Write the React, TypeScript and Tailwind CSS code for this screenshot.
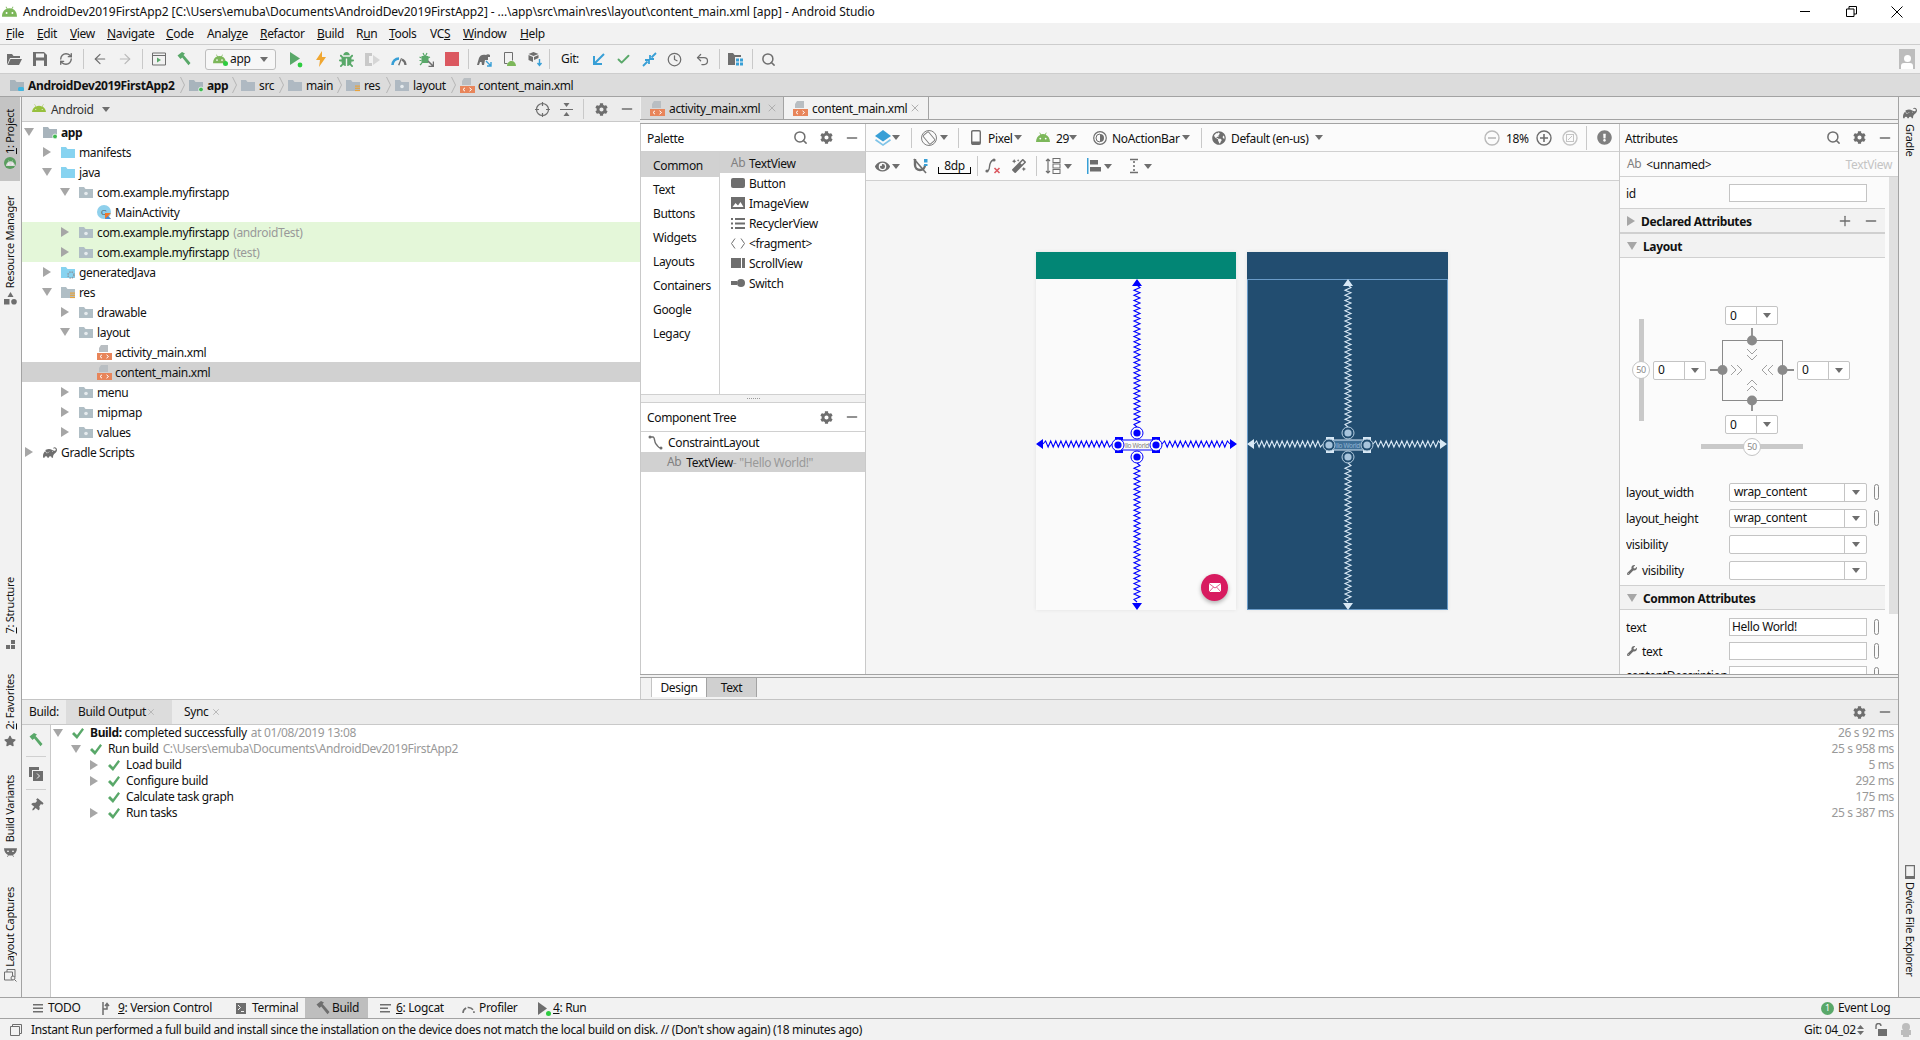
import { ReactNode } from 'react';
import { ArrowLeft, ArrowRight, Check, Minus, Plus, RefreshCw, Search, X, Clock, Undo2 } from 'lucide-react';
import { FaAndroid, FaBug, FaCog, FaEye, FaGlobeAmericas, FaMagic, FaStar, FaThumbtack, FaWrench, FaExclamationCircle } from 'react-icons/fa';
import { SiGradle } from 'react-icons/si';

const GRAY = '#6e6e6e';
const GREEN = '#59a869';
const BLUE = '#389fd6';

// text label, nudged 1px down to sit where Segoe UI sat in its row
function L({ children, className = '' }: { children: ReactNode; className?: string }) {
  return <span className={`pt-[2px] whitespace-nowrap ${className}`}>{children}</span>;
}

function Caret({ className = '' }: { className?: string }) {
  return (
    <svg width="8" height="5" viewBox="0 0 8 5" className={`shrink-0 ${className}`}>
      <path d="M0 0h8L4 5z" fill={GRAY} />
    </svg>
  );
}

function TreeArrow({ open }: { open?: boolean }) {
  if (open) {
    return (
      <svg width="10" height="8" viewBox="0 0 10 8" className="shrink-0">
        <path d="M0 0h10L5 8z" fill="#a6a6a6" />
      </svg>
    );
  }
  return (
    <svg width="8" height="10" viewBox="0 0 8 10" className="shrink-0">
      <path d="M0 0l8 5-8 5z" fill="#a6a6a6" />
    </svg>
  );
}

function Folder({ color = '#b0bec5', badge }: { color?: string; badge?: 'dot' | 'green' | 'lines' | 'gear' | 'cup' }) {
  return (
    <svg width="14" height="13" viewBox="0 0 14 13" className="shrink-0">
      <path d="M0 1h5l1.5 2H14v9H0z" fill={color} />
      {badge === 'dot' && <circle cx="7" cy="7.5" r="1.8" fill="#e6ebee" />}
      {badge === 'green' && <circle cx="12" cy="10.5" r="2.4" fill="#3fb950" stroke="#fff" strokeWidth="0.8" />}
      {badge === 'lines' && (
        <g fill="#e8a33d">
          <rect x="9" y="6.5" width="5" height="1.2" />
          <rect x="9" y="8.7" width="5" height="1.2" />
          <rect x="9" y="10.9" width="5" height="1.2" />
        </g>
      )}
      {badge === 'gear' && <circle cx="10" cy="9" r="3" fill="none" stroke="#8a9aa5" strokeWidth="1.6" strokeDasharray="1.4 1" />}
      {badge === 'cup' && <rect x="8" y="8" width="6" height="4" rx="1.5" fill="#40b6e0" />}
    </svg>
  );
}

function XmlFile() {
  return (
    <svg width="15" height="15" viewBox="0 0 15 15" className="shrink-0">
      <path d="M4 0h7v7H2V3z" fill="#b9bec2" />
      <rect x="0" y="8" width="15" height="7" fill="#e8855a" />
      <path d="M5 9.8L3 11.5 5 13.2M9.5 9.8l2 1.7-2 1.7" fill="none" stroke="#fff" strokeWidth="1" />
    </svg>
  );
}

function KotlinClass() {
  return (
    <svg width="14" height="14" viewBox="0 0 14 14" className="shrink-0">
      <circle cx="7" cy="7" r="7" fill="#8fd0ec" />
      <text x="4" y="10" fontSize="8" fill="#4a5a66" fontFamily="Liberation Sans, sans-serif">C</text>
      <path d="M8 14V8h6l-3 3 3 3z" fill="#f0772b" />
      <path d="M8 14l3-3 3 3z" fill="#3f8fe0" />
    </svg>
  );
}

function Hammer({ color = GREEN }: { color?: string }) {
  return (
    <svg width="16" height="16" viewBox="0 0 16 16" className="shrink-0">
      <path d="M1.5 4.5L6 1l3 1.5L7.5 4l1 1L14.5 12l-2 2.2-6.3-7.6L4.5 8z" fill={color} />
    </svg>
  );
}

function AndroidHead({ size = 14, color = '#7cb75a' }: { size?: number; color?: string }) {
  return (
    <svg width={size} height={size * 0.72} viewBox="0 0 14 10" className="shrink-0">
      <path d="M0 10C0 6 2 3.4 4.4 2.6L3.3.8l.6-.4L5.1 2.3a6 6 0 013.8 0L10.1.4l.6.4-1.1 1.8C12 3.4 14 6 14 10z" fill={color} />
      <circle cx="4.3" cy="6.5" r=".9" fill="#fff" />
      <circle cx="9.7" cy="6.5" r=".9" fill="#fff" />
    </svg>
  );
}

function BuildCheck() {
  return (
    <svg width="12" height="11" viewBox="0 0 12 11" className="shrink-0">
      <path d="M0 6l2-2 3 3 5.200-7L12 1.500 5 11z" fill={GREEN} />
    </svg>
  );
}

function Sep({ className = '', tall }: { className?: string; tall?: boolean }) {
  return <div className={`w-px shrink-0 bg-[#c9c9c9] ${tall ? 'h-[24px]' : 'h-[20px]'} ${className}`} />;
}

function Slot({ children }: { children?: ReactNode }) {
  return <div className="w-[25.5px] h-full shrink-0 flex items-center justify-center">{children}</div>;
}

function PanelTools({ search, minusOnly }: { search?: boolean; minusOnly?: boolean }) {
  return (
    <div className="ml-auto flex items-center">
      {search && (
        <div className="w-[26px] flex justify-center">
          <Search size={15} strokeWidth={2.4} color={GRAY} />
        </div>
      )}
      {!minusOnly && (
        <div className="w-[26px] flex justify-center">
          <FaCog size={13} color={GRAY} />
        </div>
      )}
      <div className="w-[26px] flex justify-center">
        <Minus size={16} strokeWidth={2} color={GRAY} />
      </div>
    </div>
  );
}

const menus = [
  { label: 'File', u: 0, w: 'w-[31px]' },
  { label: 'Edit', u: 0, w: 'w-[33px]' },
  { label: 'View', u: 0, w: 'w-[37px]' },
  { label: 'Navigate', u: 0, w: 'w-[59px]' },
  { label: 'Code', u: 0, w: 'w-[41px]' },
  { label: 'Analyze', u: 5, w: 'w-[53px]' },
  { label: 'Refactor', u: 0, w: 'w-[57px]' },
  { label: 'Build', u: 0, w: 'w-[39px]' },
  { label: 'Run', u: 1, w: 'w-[33px]' },
  { label: 'Tools', u: 0, w: 'w-[41px]' },
  { label: 'VCS', u: 2, w: 'w-[33px]' },
  { label: 'Window', u: 0, w: 'w-[57px]' },
  { label: 'Help', u: 0, w: 'w-[40px]' },
];

function TitleBar() {
  return (
    <div className="h-[23px] shrink-0 bg-white flex items-center pl-[2px]">
      <AndroidHead size={15} />
      <span className="ml-[6px] whitespace-nowrap tracking-[-0.08px]">
        AndroidDev2019FirstApp2 [C:\Users\emuba\Documents\AndroidDev2019FirstApp2] - ...\app\src\main\res\layout\content_main.xml [app] - Android Studio
      </span>
      <div className="ml-auto flex items-center h-full">
        <div className="w-[46px] flex justify-center">
          <div className="w-[10px] h-px bg-black" />
        </div>
        <div className="w-[46px] flex justify-center">
          <svg width="11" height="11" viewBox="0 0 11 11">
            <path d="M.5 3h7.5v7.5H.5zM3 3V.5h7.5V8H8" fill="none" stroke="#000" />
          </svg>
        </div>
        <div className="w-[46px] flex justify-center pr-[1px]">
          <svg width="12" height="12" viewBox="0 0 12 12">
            <path d="M.5.5l11 11M11.5.5l-11 11" stroke="#000" />
          </svg>
        </div>
      </div>
    </div>
  );
}

function MenuBar() {
  return (
    <div className="h-[22px] shrink-0 flex items-center pl-[6px] border-b border-[#cdcdcd]">
      {menus.map((m) => (
        <div key={m.label} className={`${m.w} shrink-0 whitespace-nowrap`}>
          {m.label.slice(0, m.u)}
          <u>{m.label[m.u]}</u>
          {m.label.slice(m.u + 1)}
        </div>
      ))}
    </div>
  );
}

function MainToolbar() {
  return (
    <div className="h-[29px] shrink-0 flex items-center pl-[2px] border-b border-[#cdcdcd]">
      <Slot>
        <svg width="15" height="13" viewBox="0 0 15 13">
          <path d="M0 1h5l1.5 2H13v2H3L0 12z" fill={GRAY} />
          <path d="M3.5 6H15l-3 6H.7z" fill={GRAY} />
        </svg>
      </Slot>
      <Slot>
        <svg width="14" height="14" viewBox="0 0 14 14">
          <path d="M0 0h11l3 3v11H0z" fill={GRAY} />
          <rect x="3" y="1.5" width="8" height="4" fill="#f2f2f2" />
          <rect x="3" y="8.5" width="8" height="5.5" fill="#f2f2f2" />
        </svg>
      </Slot>
      <Slot>
        <RefreshCw size={14} strokeWidth={2.4} color={GRAY} />
      </Slot>
      <Sep className="ml-[4.5px]" />
      <div className="w-[3px] shrink-0" />
      <Slot>
        <ArrowLeft size={16} strokeWidth={1.8} color={GRAY} />
      </Slot>
      <Slot>
        <ArrowRight size={16} strokeWidth={1.8} color="#b9b9b9" />
      </Slot>
      <Sep className="ml-[4px]" />
      <div className="w-[3px] shrink-0" />
      <Slot>
        <svg width="14" height="14" viewBox="0 0 14 14">
          <path d="M.5 1h13v12H.5zM.5 3.5h13" fill="none" stroke={GRAY} />
          <path d="M5 5.5l4 2.5-4 2.5z" fill={GREEN} />
        </svg>
      </Slot>
      <Slot>
        <Hammer />
      </Slot>
      <div className="ml-[8px] w-[71px] h-[21px] shrink-0 flex items-center pl-[7px] rounded-[3px] border border-[#bdbdbd] bg-[#f7f7f7]">
        <div className="relative">
          <AndroidHead size={13} />
          <div className="absolute right-[-2px] bottom-[-2px] w-[5px] h-[5px] rounded-full bg-[#2ecc40]" />
        </div>
        <span className="ml-[4px]">app</span>
        <Caret className="ml-auto mr-[7px]" />
      </div>
      <div className="w-[7px] shrink-0" />
      <Slot>
        <svg width="14" height="17" viewBox="0 0 14 17">
          <path d="M1 1l10 6.500L1 14z" fill={GREEN} />
          <circle cx="11" cy="14" r="2.400" fill="#2ecc40" />
        </svg>
      </Slot>
      <Slot>
        <svg width="10" height="16" viewBox="0 0 10 16">
          <path d="M6 0L0 9h4l-1 7 7-10H6z" fill="#f0a732" />
        </svg>
      </Slot>
      <Slot>
        <FaBug size={15} color={GREEN} />
      </Slot>
      <Slot>
        <svg width="16" height="15" viewBox="0 0 16 15">
          <path d="M1 1h7v3H5v7h3v3H1z" fill="#c9c9c9" />
          <path d="M9 3l7 5-7 5z" fill="#d6d6d6" />
        </svg>
      </Slot>
      <div className="w-px shrink-0" />
      <Slot>
        <svg width="16" height="13" viewBox="0 0 16 13">
          <path d="M1.500 12a6.500 6.500 0 016.500-6.500" fill="none" stroke={BLUE} strokeWidth="2.600" />
          <path d="M11 6.500A6.500 6.500 0 0114.500 12" fill="none" stroke={GRAY} strokeWidth="2.200" />
          <path d="M7 12l3-7 1 .5-2.600 7z" fill={GRAY} />
        </svg>
      </Slot>
      <div className="w-[2px] shrink-0" />
      <Slot>
        <svg width="15" height="15" viewBox="0 0 15 15">
          <path d="M2.500 4h7v7h-7z" fill={GREEN} />
          <path d="M.5 5l2 1M.5 8.500h2M1 13l2-2M4 1l1.500 3M8 1L6.500 4M11 5L9 6" stroke={GREEN} strokeWidth="1.200" />
          <path d="M9 9l5 5M14.500 9.500v5h-5" fill="none" stroke={GRAY} strokeWidth="1.500" />
        </svg>
      </Slot>
      <Slot>
        <div className="w-[14px] h-[14px] bg-[#db5860]" />
      </Slot>
      <Sep className="ml-[3px]" />
      <div className="w-[3px] shrink-0" />
      <Slot>
        <svg width="16" height="15" viewBox="0 0 16 15">
          <path d="M1 13l2-7c1-3 4-4 7-3 1-1 3-1 4 0v2h-2v3H9l-1 5H6l-.5-3H4l-1 3z" fill={GRAY} />
          <path d="M10 9l5 5M15 10v4h-4" fill="none" stroke={BLUE} strokeWidth="1.400" />
        </svg>
      </Slot>
      <Slot>
        <svg width="15" height="15" viewBox="0 0 15 15">
          <path d="M2.500.500h8v8M2.500.500v11h3" fill="none" stroke={GRAY} />
          <path d="M5 14c0-3 2-5 4.500-5S14 11 14 14z" fill="#7cb75a" />
        </svg>
      </Slot>
      <Slot>
        <svg width="15" height="15" viewBox="0 0 15 15">
          <path d="M5.500 0l5 2-5 2-5-2z" fill={GRAY} />
          <path d="M.5 3l4.500 2v5l-4.500-2zM6 5l4.500-2v3L6 8z" fill={GRAY} />
          <path d="M11.500 7v6M9.500 11l2 2.500 2-2.500" fill="none" stroke={BLUE} strokeWidth="1.400" />
        </svg>
      </Slot>
      <Sep className="ml-[1px]" />
      <span className="ml-[11px] w-[18px] shrink-0">Git:</span>
      <div className="w-[6.5px] shrink-0" />
      <Slot>
        <svg width="13" height="13" viewBox="0 0 13 13">
          <path d="M12 1L2 11M2 3v8h8" fill="none" stroke={BLUE} strokeWidth="2" />
        </svg>
      </Slot>
      <Slot>
        <Check size={15} strokeWidth={3} color={GREEN} />
      </Slot>
      <Slot>
        <svg width="15" height="15" viewBox="0 0 15 15">
          <path d="M1 14l4.500-4.500M3 8h4v4M14 1L9.500 5.500M12 7H8V3" fill="none" stroke={BLUE} strokeWidth="1.800" />
        </svg>
      </Slot>
      <Slot>
        <Clock size={15} strokeWidth={2} color={GRAY} />
      </Slot>
      <div className="w-[2.5px] shrink-0" />
      <Slot>
        <Undo2 size={15} strokeWidth={2} color={GRAY} />
      </Slot>
      <Sep className="ml-[3px]" />
      <div className="w-[3px] shrink-0" />
      <Slot>
        <svg width="15" height="14" viewBox="0 0 15 14">
          <path d="M0 1h5l1.500 2H13v2H7v8H0z" fill={GRAY} />
          <g fill={BLUE}>
            <rect x="8" y="6.500" width="3" height="3" />
            <rect x="12" y="6.500" width="3" height="3" />
            <rect x="8" y="10.500" width="3" height="3" />
            <rect x="12" y="10.500" width="3" height="3" />
          </g>
        </svg>
      </Slot>
      <Sep className="ml-[4px]" />
      <div className="w-[3px] shrink-0" />
      <Slot>
        <Search size={15} strokeWidth={2.4} color={GRAY} />
      </Slot>
      <div className="ml-auto mr-[5px] w-[16px] h-[20px] bg-[#bdbdbd] flex flex-col items-center justify-end overflow-hidden">
        <div className="w-[7px] h-[7px] rounded-full bg-white mb-[1px]" />
        <div className="w-[12px] h-[6px] rounded-t-[3px] bg-white" />
      </div>
    </div>
  );
}

function Chevron() {
  return (
    <svg width="5" height="18" viewBox="0 0 5 18" className="ml-[5px] mr-[4px] shrink-0">
      <path d="M.5 1l4 8-4 8" fill="none" stroke="#b5b5b5" />
    </svg>
  );
}

function Crumb({ icon, label, width, bold, last }: { icon: ReactNode; label: string; width: string; bold?: boolean; last?: boolean }) {
  return (
    <>
      <div className="w-[14px] shrink-0 flex justify-center">{icon}</div>
      <L className={`ml-[4px] ${width} shrink-0 ${bold ? 'font-bold' : ''}`}>{label}</L>
      {!last && <Chevron />}
    </>
  );
}

function Breadcrumb() {
  return (
    <div className="h-[23px] shrink-0 flex items-center pl-[10px] bg-[#dcdcdc] border-b border-[#a3a3a3]">
      <Crumb icon={<Folder color="#a8b4bc" badge="cup" />} label="AndroidDev2019FirstApp2" width="w-[147px]" bold />
      <Crumb icon={<Folder color="#a8b4bc" badge="green" />} label="app" width="w-[20px]" bold />
      <Crumb icon={<Folder color="#afb9c2" />} label="src" width="w-[15px]" />
      <Crumb icon={<Folder color="#afb9c2" />} label="main" width="w-[26px]" />
      <Crumb icon={<Folder color="#afb9c2" badge="lines" />} label="res" width="w-[17px]" />
      <Crumb icon={<Folder color="#afb9c2" badge="dot" />} label="layout" width="w-[33px]" />
      <Crumb icon={<XmlFile />} label="content_main.xml" width="w-[96px]" last />
    </div>
  );
}

function VText({ children, flip = true }: { children: ReactNode; flip?: boolean }) {
  return (
    <span className={`[writing-mode:vertical-rl] whitespace-nowrap leading-[14px] text-[11px] tracking-[-0.3px] ${flip ? 'rotate-180' : ''}`}>
      {children}
    </span>
  );
}

function LeftStrip() {
  return (
    <div className="w-[22px] shrink-0 flex flex-col items-center border-r border-[#a3a3a3] pr-[1px]">
      <div className="h-[84px] w-full shrink-0 flex flex-col items-center bg-[#c4c4c4] pt-[10px]">
        <div className="h-[47px] flex items-end">
          <VText>
            <u>1</u>: Project
          </VText>
        </div>
        <div className="mt-[3px] w-[12px] h-[12px] rounded-full bg-[#5a9e5f] flex items-center justify-center">
          <AndroidHead size={9} color="#dcdcdc" />
        </div>
      </div>
      <div className="mt-[16px] h-[91px] flex items-end">
        <VText>Resource Manager</VText>
      </div>
      <svg width="13" height="13" viewBox="0 0 13 13" className="mt-[4px]">
        <path d="M6.500 0l3 5h-6z" fill={GRAY} />
        <rect x="0" y="7" width="5.500" height="5.500" fill={GRAY} />
        <circle cx="10" cy="9.800" r="2.800" fill={GRAY} />
      </svg>
      <div className="mt-[273px] h-[55px] flex items-end">
        <VText>
          <u>7</u>: Structure
        </VText>
      </div>
      <svg width="9" height="9" viewBox="0 0 9 9" fill={GRAY} className="mt-[7px]">
        <rect x="5" y="0" width="4" height="4" />
        <rect x="0" y="5" width="4" height="4" />
        <rect x="5" y="5" width="4" height="4" />
      </svg>
      <div className="mt-[26px] h-[54px] flex items-end">
        <VText>
          <u>2</u>: Favorites
        </VText>
      </div>
      <div className="mt-[6px]">
        <FaStar size={12} color={GRAY} />
      </div>
      <div className="mt-[26px] h-[69px] flex items-end">
        <VText>Build Variants</VText>
      </div>
      <div className="mt-[6px] rotate-180">
        <AndroidHead size={13} color={GRAY} />
      </div>
      <div className="mt-[30px] h-[79px] flex items-end">
        <VText>Layout Captures</VText>
      </div>
      <svg width="13" height="13" viewBox="0 0 13 13" className="mt-[3px]">
        <path d="M.5 3h8v8h-8zM3 3V.5h8V8" fill="none" stroke={GRAY} />
        <circle cx="9" cy="9" r="2" fill="#f2f2f2" stroke={GRAY} />
        <path d="M10.500 10.500l2 2" stroke={GRAY} />
      </svg>
    </div>
  );
}

function RightStrip() {
  return (
    <div className="w-[22px] shrink-0 flex flex-col items-center border-l border-[#a3a3a3]">
      <div className="mt-[9px]">
        <SiGradle size={14} color={GRAY} />
      </div>
      <div className="mt-[4px] h-[34px]">
        <VText flip={false}>Gradle</VText>
      </div>
      <svg width="10" height="14" viewBox="0 0 10 14" className="mt-[707px]">
        <path d="M1 .5h8a.5.5 0 01.500.5v12a.5.5 0 01-.5.5H1a.5.5 0 01-.5-.5V1A.5.5 0 011 .5z" fill="none" stroke={GRAY} strokeWidth="1.400" />
        <rect x="1" y="11" width="8" height="2" fill={GRAY} />
      </svg>
      <div className="mt-[3px] h-[96px]">
        <VText flip={false}>Device File Explorer</VText>
      </div>
    </div>
  );
}

type TreeItem = {
  depth: number;
  arrow?: 'open' | 'closed';
  icon: ReactNode;
  label: string;
  suffix?: string;
  bold?: boolean;
  bg?: string;
};

const depthPad = ['pl-[3px]', 'pl-[21px]', 'pl-[39px]', 'pl-[57px]'];
const blueFolder = <Folder color="#87d3f0" />;
const pkg = <Folder color="#b0bec5" badge="dot" />;

const tree: TreeItem[] = [
  { depth: 0, arrow: 'open', icon: <Folder color="#a8b4bc" badge="green" />, label: 'app', bold: true },
  { depth: 1, arrow: 'closed', icon: blueFolder, label: 'manifests' },
  { depth: 1, arrow: 'open', icon: blueFolder, label: 'java' },
  { depth: 2, arrow: 'open', icon: pkg, label: 'com.example.myfirstapp' },
  { depth: 3, icon: <KotlinClass />, label: 'MainActivity' },
  { depth: 2, arrow: 'closed', icon: pkg, label: 'com.example.myfirstapp', suffix: '(androidTest)', bg: 'bg-[#e4f7d9]' },
  { depth: 2, arrow: 'closed', icon: pkg, label: 'com.example.myfirstapp', suffix: '(test)', bg: 'bg-[#e4f7d9]' },
  { depth: 1, arrow: 'closed', icon: <Folder color="#87d3f0" badge="gear" />, label: 'generatedJava' },
  { depth: 1, arrow: 'open', icon: <Folder color="#b0bec5" badge="lines" />, label: 'res' },
  { depth: 2, arrow: 'closed', icon: pkg, label: 'drawable' },
  { depth: 2, arrow: 'open', icon: pkg, label: 'layout' },
  { depth: 3, icon: <XmlFile />, label: 'activity_main.xml' },
  { depth: 3, icon: <XmlFile />, label: 'content_main.xml', bg: 'bg-[#d1d1d1]' },
  { depth: 2, arrow: 'closed', icon: pkg, label: 'menu' },
  { depth: 2, arrow: 'closed', icon: pkg, label: 'mipmap' },
  { depth: 2, arrow: 'closed', icon: pkg, label: 'values' },
  { depth: 0, arrow: 'closed', icon: <SiGradle size={15} color={GRAY} />, label: 'Gradle Scripts' },
];

function ProjectPanel() {
  return (
    <div className="w-[618px] shrink-0 flex flex-col bg-white">
      <div className="h-[25px] shrink-0 flex items-center bg-[#ececec] border-b border-[#c9c9c9] pl-[10px]">
        <FaAndroid size={14} color="#97c03d" />
        <L className="ml-[5px] text-[#333]">Android</L>
        <Caret className="ml-[9px]" />
        <div className="ml-auto flex items-center">
          <svg width="15" height="15" viewBox="0 0 15 15" className="mr-[10px]">
            <circle cx="7.500" cy="7.500" r="6" fill="none" stroke={GRAY} strokeWidth="1.200" />
            <path d="M7.500 0v4M7.500 11v4M0 7.500h4M11 7.500h4" stroke={GRAY} strokeWidth="1.200" />
          </svg>
          <svg width="13" height="13" viewBox="0 0 13 13" className="mr-[10px]">
            <path d="M0 6.500h13" stroke={GRAY} />
            <path d="M3.500 0h6L6.500 4zM3.500 13h6l-3-4z" fill={GRAY} />
          </svg>
          <Sep className="mr-[4px]" />
          <PanelTools />
        </div>
      </div>
      <div>
        {tree.map((t, i) => (
          <div key={i} className={`h-[20px] flex items-center ${depthPad[t.depth]} ${t.bg ?? ''}`}>
            <div className="w-[8px] mr-[10px] shrink-0 flex justify-center">
              {t.arrow && <TreeArrow open={t.arrow === 'open'} />}
            </div>
            <div className="w-[14px] mr-[4px] shrink-0 flex justify-center">{t.icon}</div>
            <L className={t.bold ? 'font-bold' : ''}>{t.label}</L>
            {t.suffix && <L className="ml-[4px] text-[#999]">{t.suffix}</L>}
          </div>
        ))}
      </div>
    </div>
  );
}

function EditorTab({ label, active }: { label: string; active?: boolean }) {
  return (
    <div className={`h-full shrink-0 flex items-center border-r border-[#a3a3a3] pl-[9px] ${active ? 'w-[145px] bg-[#f2f2f2]' : 'w-[143px] bg-[#d8d8d8]'}`}>
      <XmlFile />
      <L className="ml-[4px] w-[93px]">{label}</L>
      <X size={12} color="#b0b0b0" className="ml-[4px]" />
    </div>
  );
}

const paletteCats = ['Common', 'Text', 'Buttons', 'Widgets', 'Layouts', 'Containers', 'Google', 'Legacy'];

const paletteItems: { label: string; icon: ReactNode }[] = [
  { label: 'TextView', icon: <span className="text-[#808080]">Ab</span> },
  { label: 'Button', icon: <div className="w-[14px] h-[10px] rounded-[2px] bg-[#6e6e6e]" /> },
  {
    label: 'ImageView',
    icon: (
      <svg width="14" height="12" viewBox="0 0 14 12">
        <path d="M0 0h14v12H0z" fill={GRAY} />
        <path d="M1.500 10l3-4 2.500 2.500L9.500 5l3 5z" fill="#fff" />
      </svg>
    ),
  },
  {
    label: 'RecyclerView',
    icon: (
      <svg width="14" height="11" viewBox="0 0 14 11" fill={GRAY}>
        <rect x="0" y="0" width="2" height="2" />
        <rect x="4" y="0" width="10" height="2" />
        <rect x="0" y="4.500" width="2" height="2" />
        <rect x="4" y="4.500" width="10" height="2" />
        <rect x="0" y="9" width="2" height="2" />
        <rect x="4" y="9" width="10" height="2" />
      </svg>
    ),
  },
  {
    label: '<fragment>',
    icon: (
      <svg width="14" height="11" viewBox="0 0 14 11">
        <path d="M4 .5L.5 5.500 4 10.500M10 .5l3.500 5-3.500 5" fill="none" stroke={GRAY} />
      </svg>
    ),
  },
  {
    label: 'ScrollView',
    icon: (
      <svg width="14" height="10" viewBox="0 0 14 10" fill={GRAY}>
        <rect x="0" y="0" width="10" height="10" />
        <rect x="11" y="0" width="3" height="10" />
      </svg>
    ),
  },
  {
    label: 'Switch',
    icon: (
      <svg width="14" height="8" viewBox="0 0 14 8" fill={GRAY}>
        <rect x="0" y="2" width="6" height="4" />
        <circle cx="10" cy="4" r="4" />
      </svg>
    ),
  },
];

function PalettePanel() {
  return (
    <div className="w-[225px] shrink-0 flex flex-col border-r border-[#c9c9c9] bg-white">
      <div className="h-[28px] shrink-0 flex items-center pl-[6px] border-b border-[#d0d0d0]">
        <L>Palette</L>
        <PanelTools search />
      </div>
      <div className="h-[242px] shrink-0 flex">
        <div className="w-[79px] shrink-0 border-r border-[#d0d0d0]">
          {paletteCats.map((c, i) => (
            <div key={c} className={`flex items-center pl-[12px] ${i === 0 ? 'h-[25px] bg-[#d1d1d1]' : 'h-[24px]'}`}>
              <L>{c}</L>
            </div>
          ))}
        </div>
        <div className="flex-1">
          {paletteItems.map((p, i) => (
            <div key={p.label} className={`flex items-center ${i === 0 ? 'h-[21px] bg-[#d1d1d1]' : 'h-[20px]'}`}>
              <div className="ml-[11px] w-[14px] flex justify-center shrink-0">{p.icon}</div>
              <L className="ml-[4px]">{p.label}</L>
            </div>
          ))}
        </div>
      </div>
      <div className="h-[9px] shrink-0 bg-[#f2f2f2] border-y border-[#d0d0d0] flex items-center justify-center gap-[1px]">
        <div className="w-[13px] h-[2px] border-t border-dotted border-[#9a9a9a]" />
      </div>
      <div className="h-[29px] shrink-0 flex items-center pl-[6px] border-b border-[#d0d0d0]">
        <L>Component Tree</L>
        <PanelTools />
      </div>
      <div className="h-[20px] flex items-center pl-[7px]">
        <svg width="15" height="15" viewBox="0 0 15 15">
          <path d="M2 2h3c2 0 1 5 3 7s2 4 5 4" fill="none" stroke={GRAY} strokeWidth="1.400" />
          <circle cx="2" cy="2" r="1.500" fill={GRAY} />
          <circle cx="13" cy="13" r="1.500" fill={GRAY} />
        </svg>
        <L className="ml-[5px]">ConstraintLayout</L>
      </div>
      <div className="h-[20px] flex items-center pl-[26px] bg-[#d1d1d1]">
        <span className="text-[#808080]">Ab</span>
        <L className="ml-[5px]">TextView</L>
        <L className="text-[#999]">- "Hello World!"</L>
      </div>
    </div>
  );
}

function zigzag(x1: number, y1: number, x2: number, y2: number) {
  // saw line along a straight axis, as the layout editor draws spring constraints
  const len = Math.hypot(x2 - x1, y2 - y1);
  const steps = Math.round(len / 2.6);
  const ux = (x2 - x1) / len;
  const uy = (y2 - y1) / len;
  const pts: string[] = [];
  for (let i = 0; i <= steps; i++) {
    const d = (len * i) / steps;
    const side = i === 0 || i === steps ? 0 : i % 2 === 0 ? 3 : -3;
    pts.push(`${(x1 + ux * d - uy * side).toFixed(1)},${(y1 + uy * d + ux * side).toFixed(1)}`);
  }
  return pts.join(' ');
}

function Constraints({ line, ring, dot, handle, text, blue }: { line: string; ring: string; dot: string; handle: string; text: string; blue?: boolean }) {
  const cx = 101;
  const knobs = [
    [cx, 181],
    [cx, 205],
    [82, 193],
    [120, 193],
  ];
  return (
    <svg width="201" height="358" viewBox="0 0 201 358" className="absolute left-0 top-0">
      {[
        [cx, 33, cx, 175],
        [cx, 211, cx, 350],
        [7, 192, 76, 192],
        [126, 192, 194, 192],
      ].map(([a, b, c, d], i) => (
        <polyline key={i} points={zigzag(a, b, c, d)} fill="none" stroke={line} strokeWidth="1.100" />
      ))}
      <path d={`M${cx} 27l-5 7h10zM${cx} 358l-5-7h10zM0 192l7-5v10zM${blue ? 200 : 201} 192l-7-5v10z`} fill={line} />
      <rect x="79" y="185" width="8" height="16" fill={handle} />
      <rect x="116" y="185" width="8" height="16" fill={handle} />
      <rect x="84" y="188" width="35" height="10" fill={blue ? '#3f6f96' : '#fafafa'} stroke={line} strokeWidth="1" />
      <text x="101" y="195.500" textAnchor="middle" fontSize="6.500" fill={text} fontFamily="Noto Sans, sans-serif">
        llo World
      </text>
      {knobs.map(([x, y]) => (
        <g key={`${x}-${y}`}>
          <circle cx={x} cy={y} r="6" fill={blue ? '#224d70' : '#fafafa'} stroke={ring} strokeWidth="1" />
          <circle cx={x} cy={y} r="3.600" fill={dot} />
        </g>
      ))}
    </svg>
  );
}

function DesignSurface() {
  return (
    <div className="flex-1 bg-[#f5f5f5] pl-[170px] pt-[71px] flex items-start overflow-hidden">
      <div className="relative w-[200px] h-[358px] shrink-0 bg-[#fafafa] shadow-[0_0_4px_rgba(0,0,0,0.08)]">
        <div className="h-[27px] bg-[#028675]" />
        <Constraints line="#0000ff" ring="#0000ff" dot="#0000ff" handle="#0000ff" text="#808080" />
        <div className="absolute left-[165px] top-[322px] w-[27px] h-[27px] rounded-full bg-[#d81b60] shadow-[0_2px_4px_rgba(0,0,0,0.3)] flex items-center justify-center">
          <svg width="12" height="9" viewBox="0 0 12 9">
            <rect width="12" height="9" rx="1" fill="#fff" />
            <path d="M0 .5l6 4.500 6-4.500M0 9l4.500-5M12 9L7.500 4" fill="none" stroke="#d81b60" strokeWidth=".7" />
          </svg>
        </div>
      </div>
      <div className="relative ml-[11px] w-[201px] h-[358px] shrink-0 bg-[#224d70] shadow-[0_0_4px_rgba(0,0,0,0.08)]">
        <div className="h-[27px]" />
        <div className="h-[331px] border border-[#6a9bc8]" />
        <Constraints line="#d8e8f5" ring="#b5cde0" dot="#a8c4dc" handle="#d8e8f5" text="#8fb4d4" blue />
      </div>
    </div>
  );
}

function DesignToolbars() {
  const iconGray = { color: GRAY };
  return (
    <div className="shrink-0 bg-[#fbfbfb]">
      <div className="h-[28px] flex items-center border-b border-[#d0d0d0]">
        <svg width="16" height="16" viewBox="0 0 16 16" className="ml-[9px] shrink-0">
          <path d="M8 0l8 6-8 5.500L0 6z" fill={BLUE} />
          <path d="M1 9l7 5 7-5 1 1.500L8 16 0 10.500z" fill="#7fc4e8" />
        </svg>
        <Caret className="ml-[1px]" />
        <Sep className="ml-[11px]" />
        <svg width="16" height="16" viewBox="0 0 16 16" className="ml-[9px] shrink-0">
          <circle cx="8" cy="8" r="7.500" fill="none" stroke="#808080" />
          <rect x="4.500" y="2.500" width="7" height="11" rx="1" transform="rotate(-40 8 8)" fill="#fbfbfb" stroke="#808080" />
        </svg>
        <Caret className="ml-[3px]" />
        <Sep className="ml-[10px]" />
        <svg width="10" height="15" viewBox="0 0 10 15" className="ml-[12px] mr-[1px] shrink-0">
          <rect x=".7" y=".7" width="8.600" height="13.600" rx="1.200" fill="none" stroke={GRAY} strokeWidth="1.400" />
          <rect x="1" y="11.500" width="8" height="2.500" fill={GRAY} />
        </svg>
        <L className="ml-[6px] w-[25px] shrink-0">Pixel</L>
        <Caret className="ml-[1px]" />
        <div className="ml-[14px]">
          <AndroidHead size={14} />
        </div>
        <L className="ml-[6px] w-[12px] shrink-0">29</L>
        <Caret className="ml-[1px]" />
        <svg width="14" height="14" viewBox="0 0 14 14" className="ml-[16px] shrink-0">
          <circle cx="7" cy="7" r="6.300" fill="none" stroke={GRAY} strokeWidth="1.200" />
          <path d="M7 3a4 4 0 010 8z" fill={GRAY} />
          <path d="M7 3a4 4 0 000 8" fill="none" stroke={GRAY} />
        </svg>
        <L className="ml-[5px] w-[68px] shrink-0">NoActionBar</L>
        <Caret className="ml-[2px]" />
        <Sep className="ml-[11px]" />
        <div className="ml-[10px] w-[14px] flex justify-center shrink-0">
          <FaGlobeAmericas size={14} {...iconGray} />
        </div>
        <L className="ml-[5px] w-[79px] shrink-0">Default (en-us)</L>
        <Caret className="ml-[5px]" />
        <div className="ml-auto flex items-center pr-[7px]">
          <svg width="16" height="16" viewBox="0 0 16 16" className="shrink-0">
            <circle cx="8" cy="8" r="7" fill="none" stroke="#b9b9b9" strokeWidth="1.400" />
            <path d="M4 8h8" stroke="#b9b9b9" strokeWidth="1.600" />
          </svg>
          <L className="ml-[6px] w-[22px] shrink-0">18%</L>
          <svg width="16" height="16" viewBox="0 0 16 16" className="ml-[8px] shrink-0">
            <circle cx="8" cy="8" r="7" fill="none" stroke={GRAY} strokeWidth="1.400" />
            <path d="M4 8h8M8 4v8" stroke={GRAY} strokeWidth="1.600" />
          </svg>
          <svg width="16" height="16" viewBox="0 0 16 16" className="ml-[10px] shrink-0">
            <circle cx="8" cy="8" r="7" fill="none" stroke="#c4c4c4" strokeWidth="1.400" />
            <rect x="4.500" y="4.500" width="7" height="7" fill="none" stroke="#c4c4c4" />
            <path d="M6 10l4-4" stroke="#c4c4c4" />
          </svg>
          <Sep className="ml-[8px]" tall />
          <div className="ml-[9px] w-[16px] flex justify-center">
            <FaExclamationCircle size={15} color="#808080" />
          </div>
        </div>
      </div>
      <div className="h-[29px] flex items-center border-b border-[#d0d0d0]">
        <div className="ml-[8px] w-[16px] flex justify-center shrink-0">
          <FaEye size={15} {...iconGray} />
        </div>
        <Caret className="ml-[2px]" />
        <svg width="16" height="16" viewBox="0 0 16 16" className="ml-[13px] shrink-0">
          <path d="M2 1v6a5 5 0 0010 0" fill="none" stroke={GRAY} strokeWidth="2.400" />
          <path d="M1 1l12 14" stroke={GRAY} strokeWidth="1.600" />
          <rect x="11" y="1" width="3.500" height="3.500" fill={BLUE} />
          <rect x="11" y="6" width="3.500" height="2" fill={BLUE} />
        </svg>
        <div className="ml-[9px] w-[33px] shrink-0 flex flex-col items-center border-b border-black h-[16px] relative">
          <span className="leading-[15px]">8dp</span>
          <div className="absolute left-0 bottom-0 w-px h-[6px] bg-black" />
          <div className="absolute right-0 bottom-0 w-px h-[6px] bg-black" />
        </div>
        <Sep className="ml-[6px]" />
        <svg width="16" height="16" viewBox="0 0 16 16" className="ml-[7px] shrink-0">
          <path d="M2 13c3 0 2-4 3-7s2-4 4-4" fill="none" stroke={GRAY} strokeWidth="1.400" />
          <circle cx="2" cy="13" r="1.600" fill={GRAY} />
          <circle cx="9" cy="2" r="1.600" fill={GRAY} />
          <path d="M9.500 10l5 5M14.500 10l-5 5" stroke="#db5860" strokeWidth="1.600" />
        </svg>
        <div className="ml-[10px] w-[16px] shrink-0 flex justify-center">
          <FaMagic size={14} {...iconGray} />
        </div>
        <Sep className="ml-[9px]" />
        <svg width="16" height="16" viewBox="0 0 16 16" className="ml-[8px] shrink-0">
          <path d="M3 1v14M1 3l2-2 2 2M1 13l2 2 2-2" fill="none" stroke={GRAY} strokeWidth="1.200" />
          <rect x="8" y=".5" width="7" height="4" fill="none" stroke={GRAY} />
          <rect x="8" y="6" width="7" height="4" fill="none" stroke={GRAY} />
          <rect x="8" y="11.500" width="7" height="4" fill="none" stroke={GRAY} />
        </svg>
        <Caret className="ml-[3px]" />
        <svg width="16" height="16" viewBox="0 0 16 16" className="ml-[14px] shrink-0">
          <rect x="1" y="0" width="1.500" height="16" fill={BLUE} />
          <rect x="4" y="2" width="8" height="4.500" fill={GRAY} />
          <rect x="4" y="9" width="11" height="4.500" fill={GRAY} />
        </svg>
        <Caret className="ml-[2px]" />
        <svg width="16" height="16" viewBox="0 0 16 16" className="ml-[14px] shrink-0">
          <path d="M4 1.500h8M4 14.500h8" stroke={GRAY} strokeWidth="1.600" />
          <path d="M8 3v2M8 7v2M8 11v2" stroke={GRAY} strokeWidth="1.600" />
        </svg>
        <Caret className="ml-[2px]" />
      </div>
    </div>
  );
}

function Dropdown({ value, width, divider }: { value?: string; width: string; divider: string }) {
  return (
    <div className={`${width} h-[19px] shrink-0 flex items-center rounded-[2px] border border-[#c4c4c4] bg-white`}>
      <span className={`${divider} h-full flex items-center pl-[4px] border-r border-[#c4c4c4] shrink-0`}>{value}</span>
      <div className="flex-1 flex justify-center">
        <Caret />
      </div>
    </div>
  );
}

function Knob() {
  return (
    <div className="absolute w-[18px] h-[18px] rounded-full border border-[#c4c4c4] bg-white flex items-center justify-center text-[9px] text-[#888] left-1/2 top-1/2 -translate-x-1/2 -translate-y-1/2">
      50
    </div>
  );
}

function ConstraintWidget() {
  return (
    <div className="flex pl-[12px] pt-[48px]">
      <div className="w-[18px] h-[102px] mt-[13px] shrink-0 relative flex justify-center">
        <div className="w-[5px] h-full bg-[#c9c9c9]" />
        <Knob />
      </div>
      <div className="flex flex-col">
        <div className="ml-[75px]">
          <Dropdown value="0" width="w-[53px]" divider="w-[31px]" />
        </div>
        <div className="h-[90px] flex items-center">
          <div className="ml-[3px]">
            <Dropdown value="0" width="w-[53px]" divider="w-[31px]" />
          </div>
          <svg width="91" height="90" viewBox="0 1 91 90" className="shrink-0">
            <rect x="16.500" y="16.500" width="60" height="60" fill="none" stroke="#8a8a8a" />
            <path d="M46 4v12M46 76v11M4 46h12M76 46h12" stroke="#8a8a8a" strokeWidth="1.800" />
            <circle cx="46" cy="16.500" r="5" fill="#8a8a8a" />
            <circle cx="46" cy="76.500" r="5" fill="#8a8a8a" />
            <circle cx="16.500" cy="46" r="5" fill="#8a8a8a" />
            <circle cx="76.500" cy="46" r="5" fill="#8a8a8a" />
            <path
              d="M25 41l5 5-5 5M31 41l5 5-5 5M67 41l-5 5 5 5M61 41l-5 5 5 5M41 25l5 5 5-5M41 31l5 5 5-5M41 67l5-5 5 5M41 61l5-5 5 5"
              fill="none"
              stroke="#a0a0a0"
            />
          </svg>
          <Dropdown value="0" width="w-[53px]" divider="w-[31px]" />
        </div>
        <div className="ml-[75px]">
          <Dropdown value="0" width="w-[53px]" divider="w-[31px]" />
        </div>
        <div className="ml-[51px] mt-[10px] w-[102px] h-[5px] bg-[#c9c9c9] relative">
          <Knob />
        </div>
      </div>
    </div>
  );
}

function AttrRow({ label, wrench, children, pill }: { label: string; wrench?: boolean; children?: ReactNode; pill?: boolean }) {
  return (
    <div className="h-[18px] flex items-center pl-[6px]">
      <div className="w-[103px] shrink-0 flex items-center overflow-hidden">
        {wrench && <FaWrench size={10} color={GRAY} className="ml-[1px] mr-[5px] shrink-0" />}
        <span className="pt-px whitespace-nowrap">{label}</span>
      </div>
      {children}
      {pill && <div className="ml-[7px] w-[5px] h-[16px] rounded-[3px] border border-[#8a8a8a] shrink-0" />}
    </div>
  );
}

function TextBox({ value }: { value?: string }) {
  return <div className="w-[138px] h-[18px] shrink-0 flex items-center pl-[2px] border border-[#c4c4c4] bg-white">{value}</div>;
}

function SectionHeader({ label, open, extra, className = '' }: { label: string; open?: boolean; extra?: ReactNode; className?: string }) {
  return (
    <div className={`h-[25px] shrink-0 flex items-center bg-[#f2f2f2] border-y border-[#d0d0d0] pl-[7px] ${className}`}>
      <TreeArrow open={open} />
      <L className="ml-[6px] font-bold">{label}</L>
      {extra}
    </div>
  );
}

function AttributesPanel() {
  return (
    <div className="w-[279px] shrink-0 flex flex-col border-l border-[#c9c9c9] bg-[#fbfbfb]">
      <div className="h-[28px] shrink-0 flex items-center pl-[5px] border-b border-[#d0d0d0]">
        <L>Attributes</L>
        <PanelTools search />
      </div>
      <div className="h-[25px] shrink-0 flex items-center pl-[7px] border-b border-[#d0d0d0]">
        <span className="text-[#808080]">Ab</span>
        <L className="ml-[5px]">&lt;unnamed&gt;</L>
        <L className="ml-auto mr-[6px] text-[#c4c4c4]">TextView</L>
      </div>
      <div className="flex-1 flex overflow-hidden">
        <div className="w-[265px] shrink-0">
          <div className="h-[32px] flex items-center pl-[6px]">
            <span className="w-[103px] shrink-0 pt-px">id</span>
            <TextBox />
          </div>
          <SectionHeader
            className="-mt-px"
            label="Declared Attributes"
            extra={
              <div className="ml-auto flex items-center pr-[6px] gap-[10px]">
                <Plus size={16} strokeWidth={2} color={GRAY} />
                <Minus size={16} strokeWidth={2} color={GRAY} />
              </div>
            }
          />
          <SectionHeader label="Layout" open />
          <ConstraintWidget />
          <div className="mt-[30px] flex flex-col">
            {[
              { label: 'layout_width', value: 'wrap_content', pill: true },
              { label: 'layout_height', value: 'wrap_content', pill: true },
              { label: 'visibility' },
              { label: 'visibility', wrench: true },
            ].map((r) => (
              <div key={r.label + r.wrench} className="h-[26px] flex items-center">
                <AttrRow label={r.label} wrench={r.wrench} pill={r.pill}>
                  <Dropdown value={r.value} width="w-[138px]" divider="w-[115px]" />
                </AttrRow>
              </div>
            ))}
          </div>
          <div className="mt-[2px]">
            <SectionHeader label="Common Attributes" open />
          </div>
          <div className="mt-[8px] flex flex-col gap-[6px]">
            <AttrRow label="text" pill>
              <TextBox value="Hello World!" />
            </AttrRow>
            <AttrRow label="text" wrench pill>
              <TextBox />
            </AttrRow>
            <AttrRow label="contentDescription" pill>
              <TextBox />
            </AttrRow>
          </div>
        </div>
        <div className="ml-[4px] w-[9px] h-[437px] shrink-0 bg-[#e0e0e0]" />
      </div>
    </div>
  );
}

function Editor() {
  return (
    <div className="flex-1 min-w-0 flex flex-col">
      <div className="h-[23px] shrink-0 flex pl-px border-b border-[#a3a3a3]">
        <EditorTab label="activity_main.xml" />
        <EditorTab label="content_main.xml" active />
      </div>
      <div className="h-[4px] shrink-0 bg-[#f2f2f2] border-b border-[#a3a3a3]" />
      <div className="h-[550px] shrink-0 flex border-l border-[#c9c9c9]">
        <PalettePanel />
        <div className="flex-1 min-w-0 flex flex-col">
          <DesignToolbars />
          <DesignSurface />
        </div>
        <AttributesPanel />
      </div>
      <div className="h-[4px] shrink-0 border-y border-[#a3a3a3] bg-[#f2f2f2]" />
      <div className="h-[21px] shrink-0 flex pl-[10px] pb-[2px] border-l border-[#c9c9c9]">
        <div className="w-[55px] h-full flex items-center justify-center bg-white border-l border-[#c4c4c4]">Design</div>
        <div className="w-[51px] h-full flex items-center justify-center bg-[#d0d0d0] border-x border-[#a3a3a3]">Text</div>
      </div>
    </div>
  );
}

const buildRows = [
  { depth: 0, arrow: 'open', text: 'completed successfully', lead: 'Build:', note: 'at 01/08/2019 13:08', time: '26 s 92 ms' },
  { depth: 1, arrow: 'open', text: 'Run build', note: 'C:\\Users\\emuba\\Documents\\AndroidDev2019FirstApp2', time: '25 s 958 ms' },
  { depth: 2, arrow: 'closed', text: 'Load build', time: '5 ms' },
  { depth: 2, arrow: 'closed', text: 'Configure build', time: '292 ms' },
  { depth: 2, text: 'Calculate task graph', time: '175 ms' },
  { depth: 2, arrow: 'closed', text: 'Run tasks', time: '25 s 387 ms' },
];

function BuildPanel() {
  return (
    <div className="flex-1 min-h-0 flex flex-col bg-white border-t border-[#c4c4c4]">
      <div className="h-[25px] shrink-0 flex items-center bg-[#ececec] border-b border-[#c9c9c9]">
        <span className="ml-[7px] w-[37px] shrink-0">Build:</span>
        <div className="w-[106px] h-full flex items-center pl-[12px] bg-[#dcdcdc]">
          <span className="w-[68px] whitespace-nowrap">Build Output</span>
          <X size={10} color="#b0b0b0" />
        </div>
        <span className="ml-[12px] w-[26px]">Sync</span>
        <X size={10} color="#b0b0b0" className="ml-[1px]" />
        <PanelTools />
      </div>
      <div className="flex-1 flex min-h-0">
        <div className="w-[29px] shrink-0 flex flex-col items-center border-r border-[#c9c9c9] bg-[#f2f2f2]">
          <div className="mt-[7px]">
            <Hammer />
          </div>
          <div className="mt-[8px] w-[20px] h-px bg-[#d0d0d0]" />
          <svg width="14" height="14" viewBox="0 0 14 14" className="mt-[10px]">
            <path d="M0 0h10v3H3v7H0z" fill={GRAY} />
            <rect x="4" y="4" width="10" height="10" fill={GRAY} />
            <path d="M8 6.500l2.500 2.500L8 11.500" fill="none" stroke="#f2f2f2" />
          </svg>
          <div className="mt-[8px] w-[20px] h-px bg-[#d0d0d0]" />
          <div className="mt-[9px] rotate-[40deg]">
            <FaThumbtack size={13} color={GRAY} />
          </div>
        </div>
        <div className="flex-1 min-w-0">
          {buildRows.map((r) => (
            <div key={r.text} className={`h-[16px] flex items-center ${depthPad[r.depth]}`}>
              <div className="w-[8px] mr-[10px] shrink-0 flex justify-center">
                {r.arrow && <TreeArrow open={r.arrow === 'open'} />}
              </div>
              <BuildCheck />
              <span className="ml-[6px] whitespace-nowrap">
                {r.lead && <b>{r.lead} </b>}
                {r.text}
              </span>
              {r.note && <span className="ml-[4px] text-[#999] whitespace-nowrap">{r.note}</span>}
              <span className="ml-auto mr-[4px] text-[#999] whitespace-nowrap">{r.time}</span>
            </div>
          ))}
        </div>
      </div>
    </div>
  );
}

function BottomTabs() {
  return (
    <div className="h-[22px] shrink-0 flex items-center border-y border-[#a3a3a3] bg-[#f2f2f2]">
      <svg width="10" height="9" viewBox="0 0 10 9" fill={GRAY} className="ml-[33px] shrink-0">
        <rect width="10" height="1.500" />
        <rect y="3.500" width="10" height="1.500" />
        <rect y="7" width="10" height="1.500" />
      </svg>
      <span className="ml-[5px] w-[31px] shrink-0">TODO</span>
      <svg width="10" height="13" viewBox="0 0 10 13" className="ml-[23px] shrink-0">
        <path d="M1 0v13M1 7h4V2M3 4l2-2.500L7 4" fill="none" stroke={GRAY} strokeWidth="1.500" />
      </svg>
      <span className="ml-[6px] w-[93px] shrink-0 whitespace-nowrap">
        <u>9</u>: Version Control
      </span>
      <svg width="10" height="11" viewBox="0 0 10 11" className="ml-[25px] shrink-0">
        <rect width="10" height="11" fill={GRAY} />
        <path d="M2 2l2.500 2.500L2 7M5 8.500h3" fill="none" stroke="#f2f2f2" />
      </svg>
      <span className="ml-[6px] w-[43px] shrink-0">Terminal</span>
      <div className="ml-[10px] w-[63px] h-full shrink-0 flex items-center pl-[10px] bg-[#bebebe]">
        <Hammer color={GRAY} />
        <span className="ml-[1px]">Build</span>
      </div>
      <svg width="11" height="9" viewBox="0 0 11 9" fill={GRAY} className="ml-[12px] shrink-0">
        <rect width="11" height="1.500" />
        <rect y="3.500" width="8" height="1.500" />
        <rect y="7" width="10" height="1.500" />
      </svg>
      <span className="ml-[5px] w-[46px] shrink-0 whitespace-nowrap">
        <u>6</u>: Logcat
      </span>
      <svg width="13" height="9" viewBox="0 0 13 9" className="ml-[20px] shrink-0">
        <path d="M1 9a5.500 5.500 0 0111 0" fill="none" stroke={GRAY} strokeWidth="1.600" strokeDasharray="6 1.500" />
      </svg>
      <span className="ml-[4px] w-[37px] shrink-0">Profiler</span>
      <div className="ml-[22px] relative w-[10px] shrink-0">
        <svg width="10" height="13" viewBox="0 0 10 13">
          <path d="M0 0l9 6.500L0 13z" fill={GRAY} />
        </svg>
        <div className="absolute right-[-3px] bottom-[-1px] w-[5px] h-[5px] rounded-full bg-[#2ecc40]" />
      </div>
      <span className="ml-[5px] shrink-0 whitespace-nowrap">
        <u>4</u>: Run
      </span>
      <div className="ml-auto mr-[32px] flex items-center">
        <div className="w-[13px] h-[13px] rounded-full bg-[#59a869] text-white text-[9px] flex items-center justify-center">1</div>
        <span className="ml-[4px] w-[50px] whitespace-nowrap">Event Log</span>
      </div>
    </div>
  );
}

function StatusBar() {
  return (
    <div className="flex-1 flex items-center pl-[10px]">
      <svg width="12" height="12" viewBox="0 0 12 12" className="shrink-0">
        <path d="M.5 2.500h9v9h-9zM2.500 2.500v-2h9v9h-2" fill="none" stroke={GRAY} />
      </svg>
      <span className="ml-[9px] whitespace-nowrap">
        Instant Run performed a full build and install since the installation on the device does not match the local build on disk. // (Don't show again) (18 minutes ago)
      </span>
      <span className="ml-auto w-[50px] whitespace-nowrap">Git: 04_02</span>
      <svg width="7" height="10" viewBox="0 0 7 10" className="ml-[3px] shrink-0">
        <path d="M3.500 0L7 4H0zM3.500 10L0 6h7z" fill={GRAY} />
      </svg>
      <svg width="12" height="13" viewBox="0 0 12 13" className="ml-[11px] shrink-0">
        <path d="M1 6V3a2.500 2.500 0 015 0" fill="none" stroke={GRAY} strokeWidth="1.400" />
        <rect x="3" y="6" width="9" height="7" fill={GRAY} />
      </svg>
      <svg width="12" height="14" viewBox="0 0 12 14" className="ml-[13px] mr-[8px] shrink-0">
        <circle cx="6" cy="4" r="4" fill="#bdbdbd" />
        <rect x="1" y="7" width="10" height="5" fill="#bdbdbd" />
        <rect x="3" y="12" width="6" height="2" fill="#bdbdbd" />
      </svg>
    </div>
  );
}

export default function App() {
  return (
    <div className="w-[1920px] h-[1040px] flex flex-col overflow-hidden bg-[#f2f2f2] font-['Noto_Sans',sans-serif] text-[12px] text-[#111] tracking-[-0.35px]">
      <TitleBar />
      <MenuBar />
      <MainToolbar />
      <Breadcrumb />
      <div className="flex-1 min-h-0 flex">
        <LeftStrip />
        <div className="flex-1 min-w-0 flex flex-col">
          <div className="h-[602px] shrink-0 flex">
            <ProjectPanel />
            <Editor />
          </div>
          <BuildPanel />
        </div>
        <RightStrip />
      </div>
      <BottomTabs />
      <div className="h-[21px] shrink-0 flex">
        <StatusBar />
      </div>
    </div>
  );
}
